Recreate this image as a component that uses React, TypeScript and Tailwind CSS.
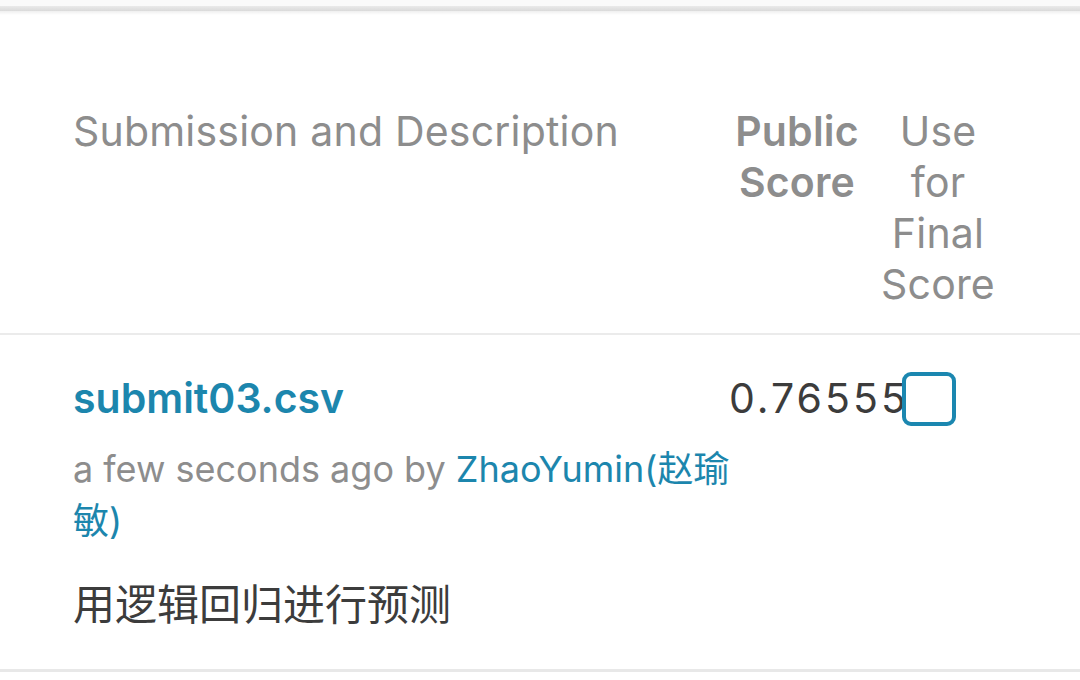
import React from "react";

const font = { fontFamily: 'Inter, "Noto Sans CJK SC", sans-serif' };

export default function App() {
  return (
    <div className="h-[680px] w-[1080px] overflow-hidden bg-white" style={font}>
      <div className="h-[6px] bg-[#fafafa]" />
      <div className="h-[5px] bg-gradient-to-b from-[#eaeaea] to-[#dadada]" />
      <div className="h-[4px] bg-gradient-to-b from-[#efefef] to-white" />

      {/* header */}
      <div className="flex h-[320px] border-b-2 border-[#ebebeb] pl-[73px] pt-[91px] text-[41px] leading-[51px] tracking-[0.2px] text-[#8d8d8d]">
        <div className="w-[656px]">Submission and Description</div>
        <div className="w-[136px] text-center font-semibold">
          Public
          <br />
          Score
        </div>
        <div className="w-[146px] text-center">
          Use
          <br />
          for
          <br />
          Final
          <br />
          Score
        </div>
      </div>

      {/* row */}
      <div className="flex h-[337px] border-b-[3px] border-[#e8e8e8] pl-[73px] pt-[40px]">
        <div className="w-[656px]">
          <div className="text-[41px] font-semibold leading-[46px] text-[#1c86ad]">
            submit03.csv
          </div>
          <div className="mt-[22px] w-[662px] text-[36px] leading-[52px] text-[#8d8d8d]">
            a few seconds ago by{" "}
            <span className="text-[#1c86ad]">ZhaoYumin(赵瑜敏)</span>
          </div>
          <div className="mt-[32px] text-[42px] leading-[52px] text-[#3c3c3c]">
            用逻辑回归进行预测
          </div>
        </div>
        <div className="w-[136px] whitespace-nowrap text-[41px] leading-[46px] tracking-[3px] text-[#3c3c3c]">
          0.76555
        </div>
        <div className="pl-[37px]">
          <div className="-mt-[3px] h-[54px] w-[54px] rounded-[9px] border-[4px] border-[#1b87b0]" />
        </div>
      </div>
    </div>
  );
}
